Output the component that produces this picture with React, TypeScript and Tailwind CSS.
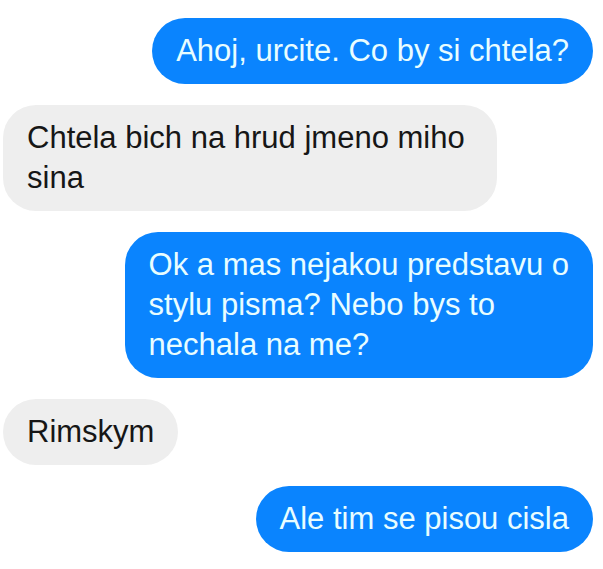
import React from 'react';

type Msg = { id: number; mine: boolean; lines: string[]; wide?: boolean };

const messages: Msg[] = [
  { id: 1, mine: true, lines: ['Ahoj, urcite. Co by si chtela?'] },
  { id: 2, mine: false, wide: true, lines: ['Chtela bich na hrud jmeno miho', 'sina'] },
  {
    id: 3,
    mine: true,
    lines: ['Ok a mas nejakou predstavu o', 'stylu pisma? Nebo bys to', 'nechala na me?'],
  },
  { id: 4, mine: false, lines: ['Rimskym'] },
  { id: 5, mine: true, lines: ['Ale tim se pisou cisla'] },
];

const Bubble: React.FC<{ msg: Msg }> = ({ msg }) => {
  return (
    <div className={msg.mine ? 'flex justify-end' : 'flex justify-start'}>
      <div
        className={
          (msg.mine
            ? 'rounded-[33px] bg-[#0a84fe] px-[24px] py-[13px] text-[#e8fdff]'
            : 'rounded-[33px] bg-[#eeeeee] px-[24px] py-[13px] text-[#161616]') +
          (msg.wide ? ' w-[494px]' : '')
        }
      >
        {msg.lines.map((line, i) => (
          <div key={i} className="whitespace-nowrap">
            {line}
          </div>
        ))}
      </div>
    </div>
  );
};

const App: React.FC = () => {
  return (
    <div
      className="min-h-screen w-[603px] bg-white pt-[18px] pl-[3px] pr-[10px] text-[31px] leading-[40px]"
      style={{ fontFamily: '"Liberation Sans", Arial, sans-serif' }}
    >
      <div className="flex flex-col gap-[21px]">
        {messages.map((m) => (
          <Bubble key={m.id} msg={m} />
        ))}
      </div>
    </div>
  );
};

export default App;
